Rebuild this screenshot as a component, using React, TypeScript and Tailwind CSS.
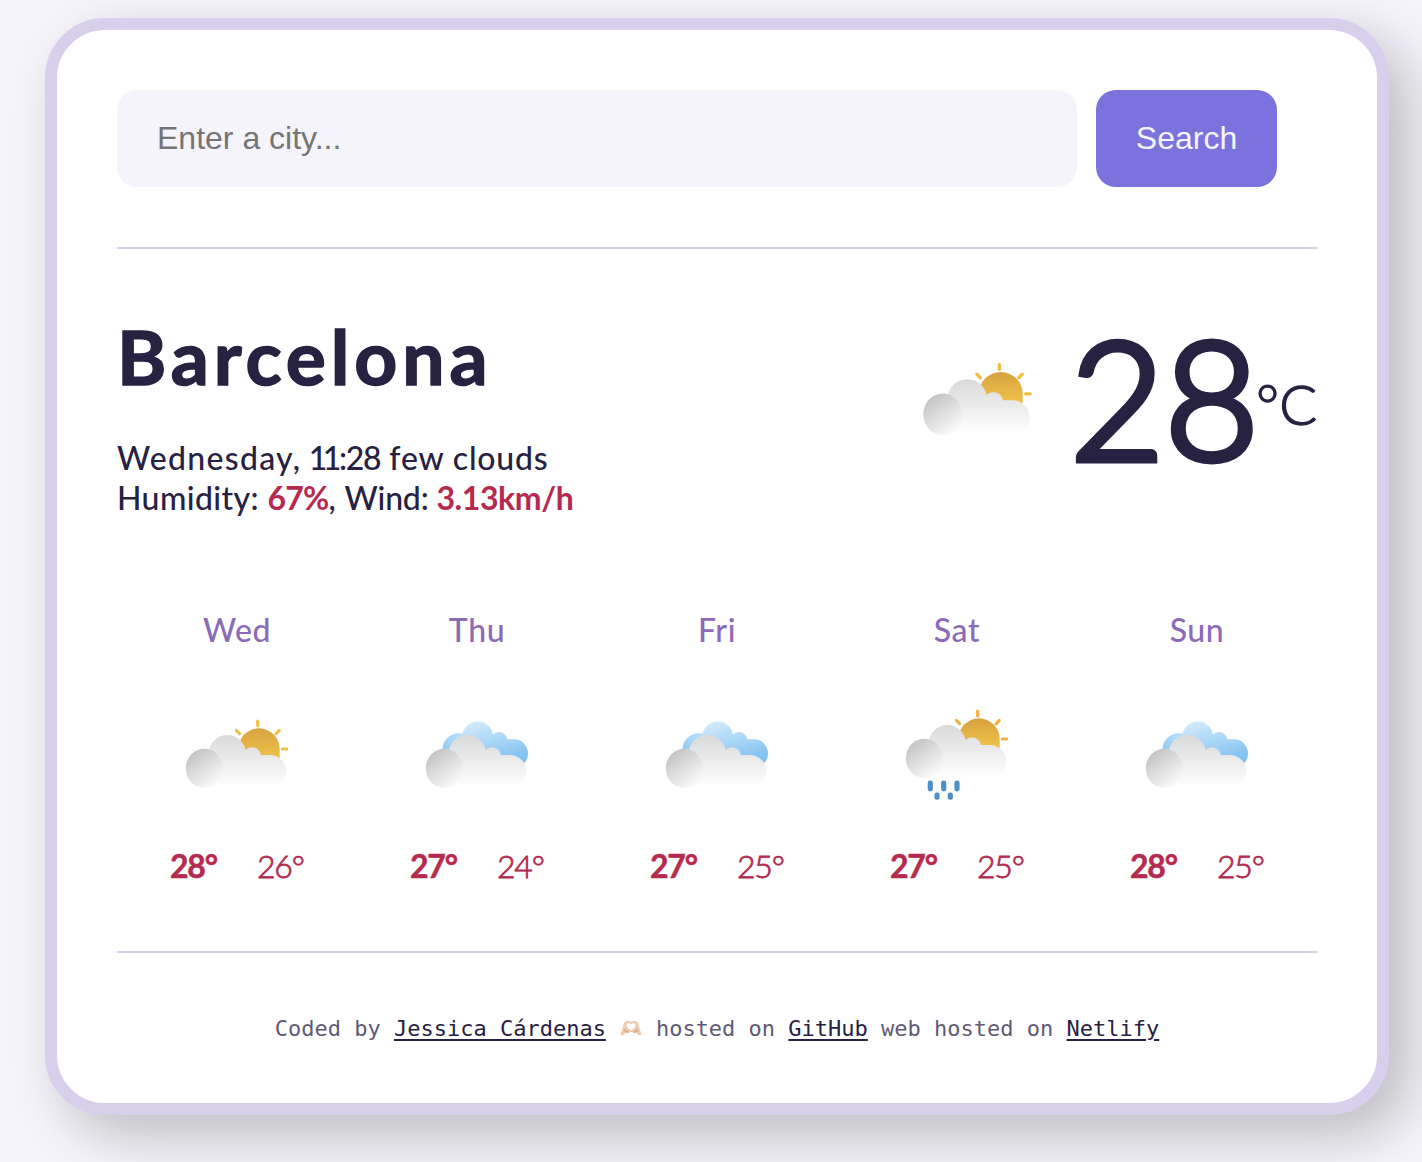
import React from "react";

type Condition = "sun-cloud" | "clouds" | "sun-rain";

function WeatherIcon({ kind, id, className }: { kind: Condition; id: string; className: string }) {
  return (
    <svg viewBox="0 0 120 120" className={className} aria-hidden="true">
      <defs>
        <linearGradient id={id + "c"} gradientUnits="userSpaceOnUse" x1="0" y1="35" x2="0" y2="87">
          <stop offset="0" stopColor="#d9d9d9" />
          <stop offset="1" stopColor="#ffffff" />
        </linearGradient>
        <linearGradient id={id + "l"} gradientUnits="userSpaceOnUse" x1="15" y1="53" x2="38" y2="85">
          <stop offset="0" stopColor="#c4c4c4" />
          <stop offset="1" stopColor="#fafafa" />
        </linearGradient>
        <linearGradient id={id + "s"} gradientUnits="userSpaceOnUse" x1="0" y1="28" x2="0" y2="58">
          <stop offset="0" stopColor="#d8a240" />
          <stop offset="1" stopColor="#efc24a" />
        </linearGradient>
        <linearGradient id={id + "b"} gradientUnits="userSpaceOnUse" x1="60" y1="21" x2="72" y2="66">
          <stop offset="0" stopColor="#d2eafc" />
          <stop offset="1" stopColor="#82c2f1" />
        </linearGradient>
        <linearGradient id={id + "d"} gradientUnits="userSpaceOnUse" x1="27" y1="54" x2="42" y2="34">
          <stop offset="0" stopColor="#8ecaf5" />
          <stop offset="1" stopColor="#b8def8" />
        </linearGradient>
      </defs>
      {kind === "clouds" ? (
        <g>
          <circle cx="41.500" cy="49.300" r="16" fill={"url(#" + id + "d)"} />
          <g fill={"url(#" + id + "b)"}>
            <circle cx="60.700" cy="37" r="15.500" />
            <circle cx="82" cy="40.500" r="8.500" />
            <path d="M60 39.300H97a14 14 0 0 1 14 14c0 5-2 9-6 12H60Z" />
          </g>
        </g>
      ) : (
        <g>
          <path d="M61.300 49a20.700 20.700 0 0 1 41.400 0V62H61.300Z" fill={"url(#" + id + "s)"} />
          <path
            d="M80.700 21.200v4.600M59.500 30.500l3 3.200M102.200 30.500l-3 3.200M105.400 49h4.400"
            stroke={kind === "sun-rain" ? "#f3b040" : "#efc046"}
            strokeWidth="3.200"
            strokeLinecap="round"
          />
        </g>
      )}
      <g fill={"url(#" + id + "c)"}>
        <circle cx="50.300" cy="53.800" r="18.700" />
        <circle cx="75" cy="56.300" r="9" />
        <path d="M27 55H93a16.200 16.200 0 0 1 0 32.400H27Z" />
      </g>
      <ellipse cx="27.300" cy="68.300" rx="18.500" ry="19.600" fill={"url(#" + id + "l)"} />
      {kind === "sun-rain" && (
        <g fill="#4c8fc4">
          <rect x="30.700" y="90.600" width="5.200" height="10.800" rx="2.400" />
          <rect x="44.100" y="90.600" width="5.200" height="10.800" rx="2.400" />
          <rect x="57.400" y="90.600" width="5.200" height="10.800" rx="2.400" />
          <rect x="37.400" y="102.600" width="5.200" height="7.200" rx="2.500" />
          <rect x="50.700" y="102.600" width="5.200" height="7.200" rx="2.500" />
        </g>
      )}
    </svg>
  );
}

function HeartHands() {
  return (
    <svg viewBox="0 0 22 16" className="mx-auto -mt-[3px] h-4 w-[22px]" aria-label="heart hands">
      <path
        d="M.5 15C1 11.500 2.500 9.500 3 7 3.300 4.500 4 1.800 6 1c1.800-.7 3.500-.3 5 .8C12.500.7 14.200.3 16 1c2 .8 2.700 3.500 3 6 .5 2.500 2 4.500 2.500 8h-3.300c-.7-1.500-2.200-2.300-3.700-2.500L11 12l-3.500.5C6 12.700 4.500 13.500 3.800 15Z"
        fill="#efcbad"
      />
      <path d="M4.500 9.500c.5 2 2 2.500 4 2.700M17.500 9.500c-.5 2-2 2.500-4 2.700" fill="none" stroke="#dba682" strokeWidth="1.500" />
      <path d="M11 10.300C8.500 8.800 6.300 7.300 6.500 5.200 6.800 3 9.500 2.800 11 4.500c1.500-1.700 4.200-1.500 4.500.7.200 2.100-2 3.600-4.500 5.100Z" fill="#fff" />
    </svg>
  );
}

const days: { name: string; kind: Condition; max: number; min: number }[] = [
  { name: "Wed", kind: "sun-cloud", max: 28, min: 26 },
  { name: "Thu", kind: "clouds", max: 27, min: 24 },
  { name: "Fri", kind: "clouds", max: 27, min: 25 },
  { name: "Sat", kind: "sun-rain", max: 27, min: 25 },
  { name: "Sun", kind: "clouds", max: 28, min: 25 },
];

const link = "text-[#272142] underline decoration-2 underline-offset-[3px]";

export default function App() {
  return (
    <div className="h-[1162px] overflow-hidden bg-[#f5f4fa] pt-[18px] pl-[45px] font-['Lato',sans-serif] text-[#272142]">
      <main className="flex h-[1097px] w-[1344px] flex-col rounded-[60px] border-[12px] border-[#d8cfec] bg-white px-[60px] pt-[60px] shadow-[20px_20px_55px_rgba(0,0,0,0.23)]">
        <form className="flex gap-[19px] border-b-2 border-[#d8cfec] pb-[60px] font-['Liberation_Sans',Arial,sans-serif] text-[32px]">
          <input
            type="search"
            placeholder="Enter a city..."
            className="h-[97px] w-[960px] rounded-[20px] bg-[#f5f4fa] px-10 placeholder:text-[#757575]"
          />
          <button type="button" className="h-[97px] w-[181px] rounded-[20px] bg-[#7b72de] pb-0.5 text-[#f5f4fa]">
            Search
          </button>
        </form>

        <section className="flex h-[290px] justify-between pt-[60px]">
          <div>
            <h1 className="-mt-[3px] h-[103px] text-[75px] leading-[100px] font-bold tracking-[4.9px] whitespace-nowrap [-webkit-text-stroke:1.5px_#272142]">
              Barcelona
            </h1>
            <p className="mt-[29px] text-[32px] leading-10 font-medium whitespace-nowrap">
              <span className="block">
                <span className="tracking-[1.3px]">Wednesday, </span>
                <span className="-ml-0.5 tracking-[-4.5px]">11</span>
                <span className="ml-0.5 tracking-[-1.2px]">:28</span>
                <span className="tracking-[0.8px]"> few clouds</span>
              </span>
              <span className="block tracking-[0.4px]">
                Humidity: <strong className="font-bold tracking-[-0.8px] text-[#b52a4f]">67%</strong>,{" "}
                <span className="tracking-[-0.2px]">Wind: </span>
                <strong className="font-bold tracking-[-0.4px] text-[#b52a4f]">3.13km/h</strong>
              </span>
            </p>
          </div>
          <div className="flex">
            <WeatherIcon kind="sun-cloud" id="now" className="mt-[33px] h-[127px] w-[127px]" />
            <div className="ml-[29px] flex">
              <span className="-mt-[7px] text-[163px] leading-[190px] font-light [-webkit-text-stroke:7px_#272142]">28</span>
              <span className="mt-[60px] -ml-[3px] text-[56px] leading-[70px] font-light [-webkit-text-stroke:1.3px_#272142]">°C</span>
            </div>
          </div>
        </section>

        <section className="flex h-[412px] pt-[71px]">
          {days.map((d) => (
            <div key={d.name} className="flex flex-1 flex-col items-center">
              <div className="text-[32px] leading-10 font-medium tracking-[0.6px] text-[#8b6bb8]">{d.name}</div>
              <div className="flex h-[196px] w-full items-start justify-center">
                <WeatherIcon
                  kind={d.kind}
                  id={d.name}
                  className={d.kind === "sun-rain" ? "mt-[40px] h-[120px] w-[120px]" : "mt-[50px] h-[120px] w-[120px]"}
                />
              </div>
              <div className="flex gap-10 text-[32px] leading-10 tracking-[-1.2px] text-[#b52a4f]">
                <span className="w-[47px] font-bold [-webkit-text-stroke:0.5px_#b52a4f]">{d.max}°</span>
                <span className="w-[47px] font-light [-webkit-text-stroke:0.8px_#b52a4f]">{d.min}°</span>
              </div>
            </div>
          ))}
        </section>

        <footer className="flex justify-center border-t-2 border-[#d8cfec] pt-[60px] font-['DejaVu_Sans_Mono',monospace] text-[22px] leading-8 whitespace-pre text-[#5f5a76]">
          <span>Coded by </span>
          <a href="#" className={link}>Jessica Cárdenas</a>
          <span className="flex w-[50px] items-center">
            <HeartHands />
          </span>
          <span>hosted on </span>
          <a href="#" className={link}>GitHub</a>
          <span> web hosted on </span>
          <a href="#" className={link}>Netlify</a>
        </footer>
      </main>
    </div>
  );
}
